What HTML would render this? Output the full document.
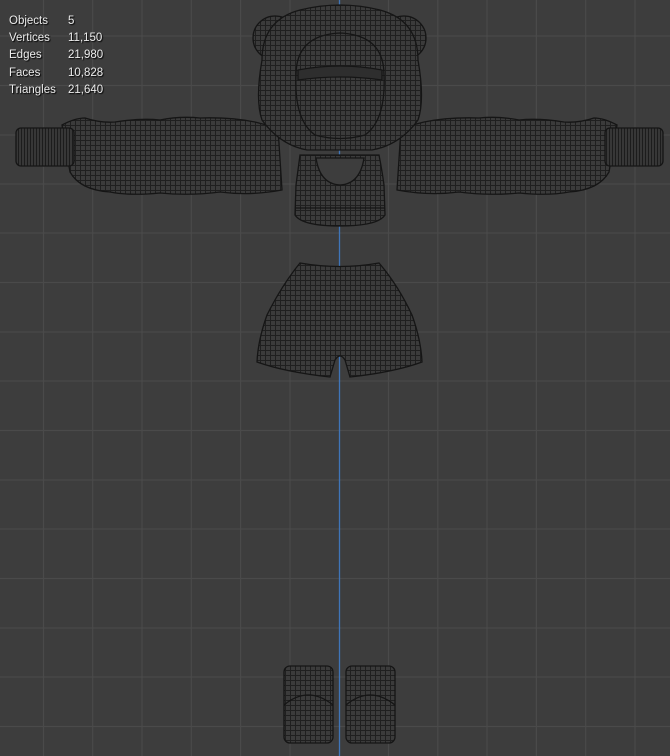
<!DOCTYPE html>
<html><head><meta charset="utf-8"><style>
html,body{margin:0;padding:0;background:#3d3d3d;width:670px;height:756px;overflow:hidden}
.stats{position:absolute;left:9px;top:13px;font-family:"Liberation Sans",sans-serif;font-size:11.5px;color:#ececec;line-height:17.2px;text-shadow:1px 1px 1px #000}
.stats div{display:flex}.stats span{width:59px}
</style></head><body>
<svg width="670" height="756" style="position:absolute;left:0;top:0">
<defs>
<pattern id="m" width="5" height="5" patternUnits="userSpaceOnUse">
<rect width="5" height="5" fill="#3b3b3b"/>
<path d="M0 0.5H5M0.5 0V5" stroke="#1f1f1f" stroke-width="1"/>
</pattern>
<pattern id="c" width="3" height="6" patternUnits="userSpaceOnUse">
<rect width="3" height="6" fill="#373737"/>
<path d="M0.5 0V6" stroke="#1c1c1c" stroke-width="1"/>
</pattern>
</defs>
<g stroke="#4a4a4a" stroke-width="1.2">
<path d="M43.5 0V756M92.7 0V756M142 0V756M191.3 0V756M240.6 0V756M290 0V756M388.5 0V756M437.8 0V756M487 0V756M536.4 0V756M585.7 0V756M635 0V756"/>
<path d="M0 36H670M0 85.5H670M0 135H670M0 184H670M0 233H670M0 282.5H670M0 332H670M0 381H670M0 430.5H670M0 480H670M0 529H670M0 578.5H670M0 628H670M0 677H670M0 726.5H670"/>
</g>
<line x1="339.5" y1="0" x2="339.5" y2="756" stroke="#3f75b8" stroke-width="1.3"/>
<g stroke="#151515" stroke-width="1.3" fill="url(#m)">
<path d="M62 125 Q75 118 85 118 Q100 123 115 122 Q140 118 160 120 Q180 116 200 118 Q230 117 255 122 L278 128 L282 190 Q250 196 220 192 Q190 196 160 193 Q130 196 110 192 Q80 190 70 172 Z"/>
<path d="M617 125 Q604 118 594 118 Q579 123 564 122 Q539 118 519 120 Q499 116 479 118 Q449 117 424 122 L401 128 L397 190 Q429 196 459 192 Q489 196 519 193 Q549 196 569 192 Q599 190 609 172 Z"/>
<rect x="16" y="128" width="58" height="38" rx="5" fill="url(#c)"/>
<rect x="605" y="128" width="58" height="38" rx="5" fill="url(#c)"/>
<circle cx="275" cy="38" r="22"/>
<circle cx="404" cy="38" r="22"/>
<path d="M262 60 Q262 20 300 10 Q340 0 380 10 Q418 20 418 60 Q425 100 418 120 Q400 145 372 150 L307 150 Q280 145 262 120 Q255 100 262 60 Z"/>
<path d="M296 75 Q296 35 340 33 Q384 35 384 75 Q386 120 365 135 Q340 142 315 135 Q294 120 296 75 Z"/>
<path d="M298 70 Q340 62 382 70 L382 80 Q340 74 298 80 Z" fill="#2e2e2e"/>
<path d="M300 155 L379 155 Q382 170 384 185 L385 215 Q378 226 340 226 Q302 226 295 215 L296 185 Q298 170 300 155 Z"/>
<path d="M316 158 Q320 184 340 185 Q360 184 364 158 Z" fill="#3d3d3d"/>
<line x1="296" y1="208" x2="385" y2="208"/>
<path d="M300 263 Q340 270 379 263 Q398 285 412 315 Q421 340 422 362 Q395 372 350 377 L345 360 Q340 352 335 360 L330 377 Q285 372 257 362 Q258 340 267 315 Q282 285 300 263 Z"/>
<rect x="284" y="666" width="49" height="77" rx="6"/>
<rect x="346" y="666" width="49" height="77" rx="6"/>
<path d="M284 705 Q308 685 333 705 M346 705 Q370 685 395 705" fill="none"/>
</g>
</svg>
<div class="stats">
<div><span>Objects</span>5</div>
<div><span>Vertices</span>11,150</div>
<div><span>Edges</span>21,980</div>
<div><span>Faces</span>10,828</div>
<div><span>Triangles</span>21,640</div>
</div>
</body></html>
